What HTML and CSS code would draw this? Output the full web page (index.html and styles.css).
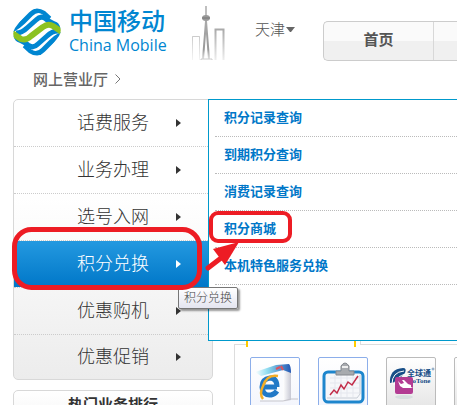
FILE: index.html
```html
<!DOCTYPE html>
<html lang="zh-CN">
<head>
<meta charset="utf-8">
<meta name="viewport" content="width=device-width, initial-scale=1">
<title>中国移动</title>
<link rel="stylesheet" href="styles.css">
</head>
<body>
<header class="header">
  <a class="brand" href="#">
    <svg class="brand-mark" viewBox="0 0 48 48" aria-hidden="true">
      <defs>
        <clipPath id="mark"><path d="M16 3Q24-2 32 3L45 15Q50 21 46 28Q39 38 32 45Q24 50 16 45L3 33Q-2 27 2 20Q9 10 16 3Z"/></clipPath>
        <g id="waves">
          <path d="M-1 22Q6 18 10 14L18 6Q24 0 30 4L38 9"/>
          <path d="M3 25Q9 25 14 20L23 12Q28 7 33 11Q40 17 49 18"/>
        </g>
      </defs>
      <g clip-path="url(#mark)" fill="none" stroke="#0086d1" stroke-width="5">
        <use href="#waves"/>
        <use href="#waves" transform="rotate(180 24 24)"/>
        <path stroke="#8cc220" stroke-width="6" d="M-1 25L8 31Q13 33 18 28L30 19Q35 15 40 18L49 24"/>
      </g>
    </svg>
    <span class="brand-text"><span class="brand-cn">中国移动</span><span class="brand-en">China Mobile</span></span>
  </a>
  <svg class="skyline" viewBox="0 0 34 56" aria-hidden="true">
    <defs>
      <linearGradient id="tower" x2="0" y2="1"><stop stop-color="#aaa"/><stop offset=".75" stop-color="#999"/><stop offset="1" stop-color="#e2e2e2"/></linearGradient>
      <linearGradient id="block" x2="0" y2="1"><stop stop-color="#aaa"/><stop offset="1" stop-color="#eee"/></linearGradient>
    </defs>
    <path d="M1.500 55V31.500H8.500V55" fill="none" stroke="url(#block)" opacity=".6"/>
    <path d="M24.500 55V24.500H32.500V55" fill="none" stroke="url(#block)" stroke-width="2"/>
    <path d="M15 1v12" stroke="#aaa" stroke-width="1.500"/>
    <ellipse cx="15" cy="13" rx="4" ry="3" fill="#999"/>
    <path d="M11 13h8" stroke="#777"/>
    <path d="M14 16h2l3 38h-2l-2-25-2 25h-2z" fill="url(#tower)"/>
    <path d="M10 55v-1h11v1" fill="none" stroke="#ccc"/>
  </svg>
  <button class="city" type="button">天津<svg class="caret" viewBox="0 0 9 5" aria-hidden="true"><path d="M0 0h9L5 5H4z" fill="#666"/></svg></button>
  <nav class="topnav"><a class="topnav-item" href="#">首页</a><a class="topnav-item" href="#" aria-label="更多"></a></nav>
</header>

<div class="crumb"><a href="#">网上营业厅</a><svg class="crumb-arrow" viewBox="0 0 6 10" aria-hidden="true"><path d="M.5.5L5 5 .5 9.500" fill="none" stroke="#777"/></svg></div>

<main class="main">
  <aside class="side">
    <nav class="menu">
      <a class="menu-item" href="#">话费服务</a>
      <a class="menu-item" href="#">业务办理</a>
      <a class="menu-item" href="#">选号入网</a>
      <a class="menu-item active" href="#">积分兑换</a>
      <a class="menu-item" href="#">优惠购机</a>
      <a class="menu-item" href="#">优惠促销</a>
    </nav>
    <section class="hot"><h2>热门业务排行</h2></section>
  </aside>

  <div class="content">
    <div class="tabs"><span class="tab-start"></span><span class="tab-gap"></span><span class="tab-rest"></span></div>
    <div class="tiles">
      <a class="tile" href="#" aria-label="网上浏览">
        <svg viewBox="0 0 48 50" aria-hidden="true">
          <defs><linearGradient id="beam"><stop stop-color="#fff"/><stop offset=".35" stop-color="#8fdcf0"/><stop offset="1" stop-color="#2458b4"/></linearGradient><linearGradient id="cube"><stop stop-color="#fff"/><stop offset="1" stop-color="#c7c8d4"/></linearGradient></defs>
          <path d="M9 16L32 12V44L9 43Z" fill="#fafbfe"/>
          <path d="M32 12L40 14V42L32 44Z" fill="url(#cube)"/>
          <path d="M4 14L25 7L38 6Q40 8 40 15L32 12L10 18Z" fill="url(#beam)"/>
          <path d="M25 11l4-2M30 8l2 4" stroke="#dc5360" stroke-width="2"/>
          <path d="M9 43h23l8-2h7" fill="none" stroke="#c4c4cc"/>
          <path d="M26 29H13M26 29Q26 20 19 20Q11 21 11 29Q12 38 20 37Q24 36 26 33" fill="none" stroke="#2279c7" stroke-width="5"/>
          <path d="M27 18Q16 16 12 28Q8 36 12 41" fill="none" stroke="#f3ad26" stroke-width="2.500"/>
        </svg>
      </a>
      <a class="tile" href="#" aria-label="业务统计">
        <svg viewBox="0 0 48 50" aria-hidden="true">
          <rect x="5" y="14" width="39" height="30" rx="4" fill="#f6f7fa" stroke="#1e86cd" stroke-width="3"/>
          <path d="M8 40h30l3-4V17" fill="none" stroke="#c8cdd6"/>
          <path d="M11 20h29M11 25h29M11 30h29M11 35h29M16 17v22M22 17v22M28 17v22M34 17v22" stroke="#e5e7ee"/>
          <path d="M17 17v-4h5V8q4-6 8 0v5h5v4z" fill="#a7aaae" stroke="#84888e"/>
          <path d="M23 9h6" stroke="#eee" stroke-width="2"/>
          <path d="M11 37l4-5 3 3 4-8 3 4 4-7 4 3 6-9" fill="none" stroke="#c22b48" stroke-width="1.500"/>
        </svg>
      </a>
      <a class="tile plain" href="#" aria-label="全球通 GoTone">
        <svg viewBox="0 0 48 50" aria-hidden="true">
          <path d="M3 25Q2 11 16 10Q20 10 18 15L9 24Z" fill="#174e87"/>
          <path d="M5 26Q5 14 17 13M7 27Q9 18 19 16" fill="none" stroke="#fff"/>
          <text class="tile-cn" x="20" y="18">全球通</text>
          <text class="tile-en" x="20" y="25">GoTone</text>
          <circle cx="46" cy="11" r="1" fill="none" stroke="#174e87" stroke-width=".5"/>
          <rect x="8" y="19" width="18" height="17" rx="2" fill="#b33c93"/>
          <path d="M11 23l3 3 3-1-2-3h2l4 4 3 1v2l2 1H16l-3-2z" fill="#fff"/>
          <ellipse cx="17" cy="39" rx="9" ry="2" fill="#d7dfdf"/>
        </svg>
      </a>
      <a class="tile plain" href="#" aria-label="更多业务"></a>
    </div>
  </div>

  <nav class="submenu">
    <a href="#">积分记录查询</a>
    <a href="#">到期积分查询</a>
    <a href="#">消费记录查询</a>
    <a href="#">积分商城</a>
    <a href="#">本机特色服务兑换</a>
  </nav>
  <div class="tooltip" role="tooltip">积分兑换</div>
  <svg class="marks" viewBox="0 0 290 90" aria-hidden="true">
    <g fill="none" stroke="#ed1c24">
      <rect x="4.500" y="20.500" width="185" height="58" rx="17" stroke-width="5"/>
      <rect x="201" y="4" width="79" height="28" rx="7" stroke-width="4"/>
      <path d="M198 59L215 46" stroke-width="5" stroke-linecap="round"/>
    </g>
    <path d="M203 40L229 33L215 56Z" fill="#ed1c24"/>
  </svg>
</main>
</body>
</html>
```
FILE: styles.css
```css
* { box-sizing: border-box; }

body {
  height: 100vh;
  margin: 0;
  padding-left: 13px;
  overflow: hidden;
  background: #fff;
  color: #333;
  font-family: "Liberation Sans", "Noto Sans CJK SC", sans-serif;
}

a { color: inherit; text-decoration: none; }
svg { display: block; }

.header {
  display: flex;
  align-items: flex-start;
  height: 62px;
}

.brand {
  display: flex;
  flex: none;
  gap: 8px;
  width: 178px;
  padding-top: 8px;
  color: #0086d1;
}
.brand-mark { flex: none; width: 48px; height: 48px; }
.brand-text { display: flex; flex-direction: column; white-space: nowrap; }
.brand-cn { font-size: 24px; font-weight: 500; line-height: 28px; }
.brand-en { font-family: "Open Sans", sans-serif; font-size: 16px; font-weight: 500; line-height: 18px; }

.skyline { flex: none; width: 34px; height: 56px; margin-top: 5px; }

.city {
  display: flex;
  flex: none;
  align-items: center;
  gap: 1px;
  margin: 19px 0 0 30px;
  padding: 0;
  border: 0;
  background: none;
  color: #555;
  font: 15px/20px "Noto Sans CJK SC", sans-serif;
  font-weight: 300;
  white-space: nowrap;
}
.caret { width: 9px; height: 5px; }

.topnav {
  display: flex;
  flex: 1;
  min-width: 0;
  height: 40px;
  margin: 21px 0 0 28px;
  border: 1px solid #ccc;
  border-right: 0;
  border-radius: 5px 0 0 5px;
  background: linear-gradient(#fafafa 50%, #f0f0f0 50%);
}
.topnav-item {
  flex: none;
  width: 110px;
  border-right: 1px solid #d8d8d8;
  color: #555;
  font-size: 15px;
  font-weight: bold;
  line-height: 36px;
  text-align: center;
}
.topnav-item:last-child { flex: 1; border: 0; }

.crumb {
  display: flex;
  align-items: center;
  gap: 7px;
  height: 37px;
  padding: 0 0 4px 20px;
  color: #666;
  font-size: 15px;
  font-weight: 500;
}
.crumb-arrow { width: 6px; height: 10px; }

.main {
  position: relative;
  display: grid;
  grid-template-columns: 200px 1fr;
  gap: 21px;
}

.menu {
  border: 1px solid #d8d8d8;
  border-radius: 5px;
  background: linear-gradient(#fff 35%, #ececec);
}
.menu-item {
  display: flex;
  align-items: center;
  justify-content: space-between;
  height: 47px;
  padding: 0 31px 0 63px;
  border-bottom: 1px dotted #ccc;
  font-size: 18px;
  font-weight: 300;
  line-height: 26px;
}
.menu-item:last-child { height: 44px; border: 0; }
.menu-item::after {
  content: "";
  border-left: 5px solid #333;
  border-top: 4px solid transparent;
  border-bottom: 4px solid transparent;
}
.active {
  background: linear-gradient(#2499e0, #0077c8);
  background-clip: padding-box;
  color: #fff;
}
.active::after { border-left-color: #fff; }

.hot {
  height: 60px;
  margin-top: 10px;
  border: 1px solid #d8d8d8;
  border-radius: 5px;
  background: linear-gradient(#fff, #eee);
}
.hot h2 {
  margin: 0;
  font-size: 15px;
  line-height: 28px;
  text-align: center;
}

.content { min-width: 0; padding-top: 242px; }
.tabs { display: flex; height: 6px; }
.tabs span { border-color: #ddd; }
.tab-start {
  width: 14px;
  margin-top: 3px;
  border-top: 1px solid;
  border-left: 1px solid;
}
.tab-gap {
  width: 110px;
  border: solid;
  border-width: 0 2px;
}
.tabs .tab-gap { margin-left: -2px; border-color: #fc0; }
.tab-rest {
  flex: 1;
  height: 4px;
  margin-left: 4px;
  border-left: 1px solid;
  border-bottom: 1px solid;
}
.tiles {
  display: flex;
  gap: 18px;
  height: 90px;
  padding: 10px 0 0 15px;
  overflow: hidden;
  border-left: 1px solid #ddd;
}
.tile {
  flex: none;
  width: 50px;
  height: 52px;
  border: 1px solid #8caeea;
  border-radius: 2px;
  background: linear-gradient(#fff, #f3f5fc);
}
.plain { border-color: #bbb; background: linear-gradient(#fff, #e6e6e6); }
.tile-cn { fill: #174e87; font: bold 8px "Noto Sans CJK SC", sans-serif; }
.tile-en { fill: #174e87; font: bold 7px "Liberation Serif", serif; }

.submenu {
  position: absolute;
  top: 0;
  left: 195px;
  right: 0;
  padding: 0 0 55px 6px;
  border: 1px solid #09c;
  border-right: 0;
  background: #fff;
}
.submenu a {
  display: block;
  height: 37px;
  padding-left: 9px;
  border-bottom: 1px dotted #bbb;
  color: #0077c8;
  font-size: 13px;
  font-weight: bold;
  line-height: 36px;
}

.tooltip {
  position: absolute;
  top: 188px;
  left: 165px;
  padding: 0 5px;
  border: 1px solid #767676;
  border-radius: 2px;
  background: linear-gradient(#fff, #e4e5f0);
  box-shadow: 2px 2px 2px #0006;
  color: #444;
  font-size: 12px;
  font-weight: 300;
  line-height: 20px;
}

.marks {
  position: absolute;
  top: 110px;
  left: -3px;
  width: 290px;
  height: 90px;
  pointer-events: none;
}
```
